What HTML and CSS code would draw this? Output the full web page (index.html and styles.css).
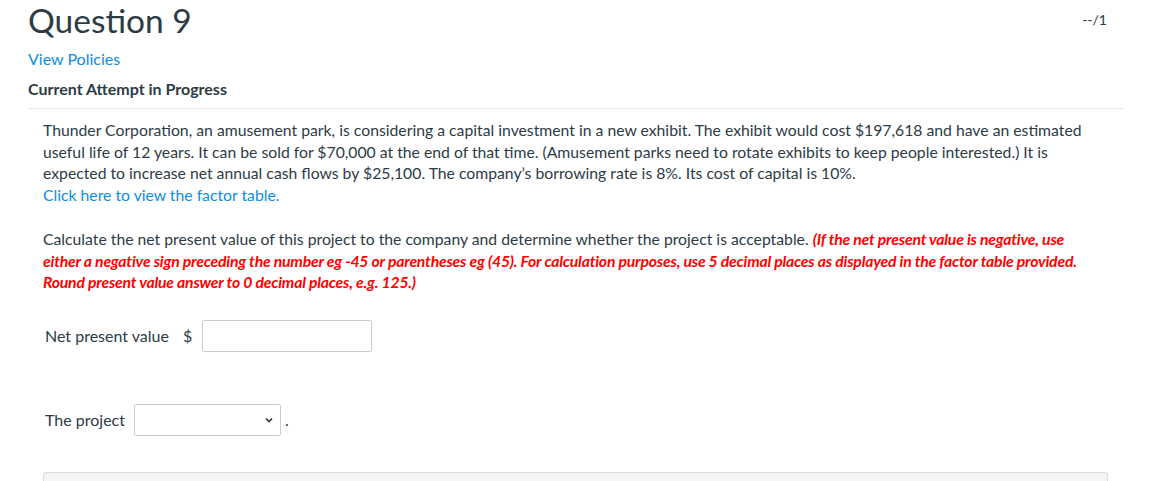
FILE: index.html
```html
<!DOCTYPE html>
<html>
<head>
<meta charset="utf-8">
<link rel="stylesheet" href="styles.css">
</head>
<body>
<div class="page">
  <div class="header">
    <h1 class="title">Question 9</h1>
    <div class="score">--/1</div>
  </div>
  <a class="policies" href="#">View Policies</a>
  <div class="attempt">Current Attempt in Progress</div>
  <div class="content">
    <p class="para">Thunder Corporation, an amusement park, is considering a capital investment in a new exhibit. The exhibit would cost $197,618 and have an estimated useful life of 12 years. It can be sold for $70,000 at the end of that time. (Amusement parks need to rotate exhibits to keep people interested.) It is expected to increase net annual cash flows by $25,100. The company’s borrowing rate is 8%. Its cost of capital is 10%.<br><a class="link" href="#">Click here to view the factor table.</a></p>
    <p class="para">Calculate the net present value of this project to the company and determine whether the project is acceptable. <em class="warn">(If the net present value is negative, use either a negative sign preceding the number eg -45 or parentheses eg (45). For calculation purposes, use 5 decimal places as displayed in the factor table provided. Round present value answer to 0 decimal places, e.g. 125.)</em></p>
    <div class="row npv">
      <span class="label">Net present value</span>
      <span class="dollar">$</span>
      <span class="input"></span>
    </div>
    <div class="row proj">
      <span class="label">The project</span>
      <span class="select">
        <svg class="chev" width="10" height="10" viewBox="0 0 10 10"><path d="M2 3.5 L5 6.5 L8 3.5" fill="none" stroke="#333" stroke-width="1.6"/></svg>
      </span>
      <span class="dot">.</span>
    </div>
    <div class="box"></div>
  </div>
</div>
</body>
</html>
```

FILE: styles.css
```css
html, body {
  margin: 0;
  padding: 0;
  background: #fff;
}
body {
  font-family: Lato, "Noto Sans", sans-serif;
  color: #2d3b45;
  overflow: hidden;
}
.page {
  width: 1096px;
  margin-left: 28px;
}
.header {
  display: flex;
  justify-content: space-between;
  align-items: flex-start;
}
.title {
  margin: 0;
  font-size: 33.5px;
  font-weight: 400;
  line-height: 40px;
  color: #2d3b45;
}
.score {
  font-size: 14px;
  color: #2d3b45;
  padding-top: 11px;
  padding-right: 17px;
}
.policies {
  display: block;
  margin-top: 9px;
  font-size: 16px;
  line-height: 20px;
  color: #0b8de3;
  text-decoration: none;
}
.attempt {
  margin-top: 10px;
  font-size: 16px;
  line-height: 20px;
  font-weight: 700;
  color: #2d3b45;
  padding-bottom: 9px;
  border-bottom: 1px solid #e5e5e5;
}
.content {
  padding-left: 15px;
  padding-right: 16px;
  padding-top: 10px;
}
.para {
  margin: 0 0 22px 0;
  padding-right: 13px;
  font-size: 15.75px;
  line-height: 21.7px;
  color: #2d3b45;
}
.link {
  color: #0b8de3;
  text-decoration: none;
}
.warn {
  color: #ff0000;
  font-weight: 700;
  letter-spacing: -0.2px;
}
.row {
  display: flex;
  align-items: center;
  font-size: 16px;
  color: #2d3b45;
}
.npv {
  margin-top: 27px;
  padding-left: 2px;
}
.npv .dollar {
  margin-left: 14px;
  margin-right: 10px;
}
.input {
  display: block;
  width: 168px;
  height: 30px;
  border: 1px solid #c7cdd1;
  border-radius: 2px;
  background: #fff;
}
.proj {
  margin-top: 52px;
  padding-left: 2px;
}
.select {
  display: flex;
  align-items: center;
  justify-content: flex-end;
  margin-left: 9px;
  width: 145px;
  height: 30px;
  border: 1px solid #c7cdd1;
  border-radius: 2px;
  background: #fff;
}
.chev {
  margin-right: 6px;
}
.dot {
  margin-left: 4px;
}
.box {
  margin-top: 36px;
  height: 30px;
  background: #f5f5f5;
  border: 1px solid #dcdcdc;
  border-radius: 3px;
}
```
